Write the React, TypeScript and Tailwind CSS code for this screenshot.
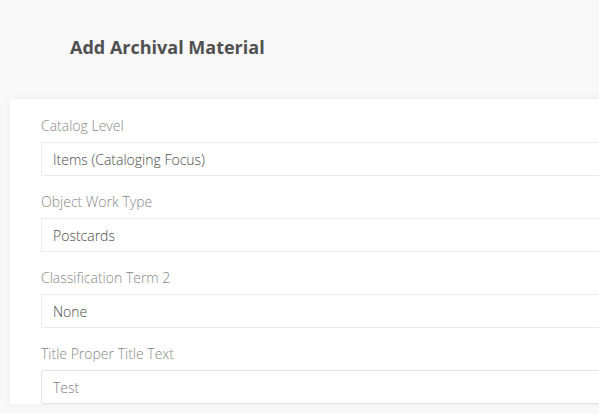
const FIELDS = [
  { label: "Catalog Level", value: "Items (Cataloging Focus)", kind: "select" },
  { label: "Object Work Type", value: "Postcards", kind: "select" },
  { label: "Classification Term 2", value: "None", kind: "select" },
  { label: "Title Proper Title Text", value: "Test", kind: "input" },
];

export default function App() {
  return (
    <div className="h-[414px] w-[599px] overflow-hidden bg-[#f8f8f8] font-['Open_Sans',sans-serif]">
      {/* page header */}
      <div className="flex h-[99px] items-start pl-[70px] pt-[35px]">
        <h1 className="text-[18px] font-bold leading-[25px] text-[#505050]">Add Archival Material</h1>
      </div>

      {/* form card */}
      <div className="ml-[10px] w-[640px] rounded-tl-[4px] bg-white pl-[31px] pt-[17px] font-light shadow-[0_0_6px_rgba(0,0,0,0.05)]">
        {FIELDS.map((f) => (
          <div key={f.label} className="mb-[16px]">
            <div className="text-[14px] leading-[20px] text-[#888]">{f.label}</div>
            <div
              className={
                f.kind === "select"
                  ? "mt-[6px] flex h-[34px] items-center border border-[#ebebeb] pl-[11px] text-[14px] text-[#4a4a4a]"
                  : "mt-[6px] flex h-[34px] items-center rounded-[3px] border border-[#e3e3e3] pl-[11px] text-[14px] text-[#808080]"
              }
            >
              {f.value}
            </div>
          </div>
        ))}
      </div>
    </div>
  );
}
